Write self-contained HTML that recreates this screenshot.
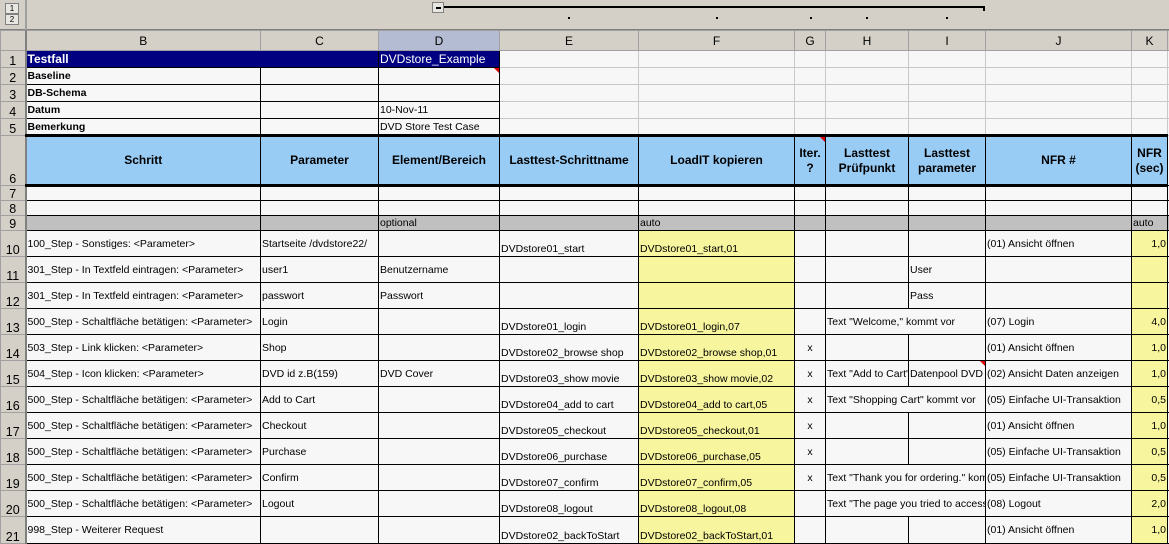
<!DOCTYPE html>
<html><head><meta charset="utf-8"><style>
*{margin:0;padding:0;box-sizing:border-box}
body{width:1169px;height:543px;overflow:hidden;background:#d4d0c8;font-family:"Liberation Sans",Arial,sans-serif;font-size:10.5px;color:#000;position:relative}
.top{position:absolute;left:0;top:0;width:1169px;height:30px;background:#d4d0c8;border-bottom:1px solid #808080}
.vb{position:absolute;left:25px;top:0;width:2px;height:30px;background:#a0a0a0}
.btn{position:absolute;left:5px;width:14px;height:11px;border:1px solid #808080;background:#e8e6e0;font-size:8px;line-height:9px;text-align:center}
.ln{position:absolute;left:444px;top:6px;width:541px;height:2px;background:#000}
.ln2{position:absolute;left:983px;top:6px;width:2px;height:5px;background:#000}
.mb{position:absolute;left:432px;top:2px;width:12px;height:11px;border:1px solid #808080;background:#e8e6e0}
.mb:after{content:"";position:absolute;left:3px;top:4px;width:5px;height:2px;background:#000}
.dot{position:absolute;top:17px;width:2px;height:2px;background:#000}
table{position:absolute;left:0;top:30px;border-collapse:collapse;table-layout:fixed;width:1171px}
td{border:1px solid #000;background:#f7f7f7;white-space:nowrap;overflow:hidden;padding:0 1px;vertical-align:middle;line-height:12px}
tr.ch td{background:#d4d0c8;border:1px solid #a0a0a0;text-align:center;font-size:12px;height:20px}
td.rh{background:#d4d0c8;border:1px solid #a0a0a0;border-right:2px solid #808080;text-align:center;font-size:12.5px;vertical-align:bottom;padding:0}
tr.m td:not(.rh){border-color:#c8c8c8}
tr.m td.k{border-color:#000}
.nv{background:#000080 !important;color:#fff;font-weight:bold;font-size:12px}
.nvd{background:#000080 !important;color:#fff;font-size:12px}
.b{font-weight:bold}
tr.h td:not(.rh){background:#99ccf5;font-weight:bold;font-size:12px;text-align:center;border-top:3px solid #000;border-bottom:3px solid #000;white-space:normal;line-height:15px}
tr.g td:not(.rh){background:#c0c0c0}
.y{background:#f8f59f !important}
.bt{vertical-align:bottom;padding-bottom:1px}
.r{text-align:right}
.c{text-align:center}
</style></head><body>
<div class="top">
<div class="vb"></div>
<div class="btn" style="top:3px">1</div><div class="btn" style="top:14px">2</div>
<div class="mb"></div><div class="ln"></div><div class="ln2"></div>
<div class="dot" style="left:568px"></div><div class="dot" style="left:716px"></div><div class="dot" style="left:810px"></div><div class="dot" style="left:866px"></div><div class="dot" style="left:946px"></div>
</div>
<table>
<colgroup><col style="width:25px"><col style="width:235px"><col style="width:118px"><col style="width:121px"><col style="width:139px"><col style="width:156px"><col style="width:31px"><col style="width:83px"><col style="width:77px"><col style="width:146px"><col style="width:36px"><col style="width:4px"></colgroup>
<tr class="ch"><td style="border-right:2px solid #808080"></td><td>B</td><td>C</td><td style="background:#b4bcd4">D</td><td>E</td><td>F</td><td>G</td><td>H</td><td>I</td><td>J</td><td>K</td><td></td></tr>
<tr class="m" style="height:17px"><td class="rh">1</td><td class="nv k" colspan="2">Testfall</td><td class="nvd k">DVDstore_Example</td><td></td><td></td><td></td><td></td><td></td><td></td><td></td><td></td></tr>
<tr class="m" style="height:17px"><td class="rh">2</td><td class="b k">Baseline</td><td class="k"></td><td class="k" style="position:relative"><span style="position:absolute;right:0;top:0;width:0;height:0;border-top:5px solid #d00;border-left:5px solid transparent"></span></td><td></td><td></td><td></td><td></td><td></td><td></td><td></td><td></td></tr>
<tr class="m" style="height:17px"><td class="rh">3</td><td class="b k">DB-Schema</td><td class="k"></td><td class="k"></td><td></td><td></td><td></td><td></td><td></td><td></td><td></td><td></td></tr>
<tr class="m" style="height:17px"><td class="rh">4</td><td class="b k">Datum</td><td class="k"></td><td class="k">10-Nov-11</td><td></td><td></td><td></td><td></td><td></td><td></td><td></td><td></td></tr>
<tr class="m" style="height:17px"><td class="rh">5</td><td class="b k">Bemerkung</td><td class="k"></td><td class="k">DVD Store Test Case</td><td></td><td></td><td></td><td></td><td></td><td></td><td></td><td></td></tr>
<tr class="h" style="height:50px"><td class="rh">6</td><td>Schritt</td><td>Parameter</td><td>Element/Bereich</td><td>Lasttest-Schrittname</td><td>LoadIT kopieren</td><td style="position:relative">Iter. ?<span style="position:absolute;right:0;top:0;border-top:5px solid #d00;border-left:5px solid transparent"></span></td><td>Lasttest Prüfpunkt</td><td>Lasttest parameter</td><td>NFR #</td><td>NFR (sec)</td><td style="background:#f7f7f7;border:none"></td></tr>
<tr style="height:15px"><td class="rh">7</td><td></td><td></td><td></td><td></td><td></td><td></td><td></td><td></td><td></td><td></td><td></td></tr>
<tr style="height:15px"><td class="rh">8</td><td></td><td></td><td></td><td></td><td></td><td></td><td></td><td></td><td></td><td></td><td></td></tr>
<tr class="g" style="height:15px"><td class="rh">9</td><td></td><td></td><td class="bt">optional</td><td></td><td class="bt">auto</td><td></td><td></td><td></td><td></td><td class="bt">auto</td><td></td></tr>
<tr style="height:26px"><td class="rh">10</td><td>100_Step - Sonstiges: &lt;Parameter&gt;</td><td>Startseite /dvdstore22/</td><td></td><td class="bt">DVDstore01_start</td><td class="y bt">DVDstore01_start,01</td><td></td><td></td><td></td><td>(01) Ansicht öffnen</td><td class="y r">1,0</td><td></td></tr>
<tr style="height:26px"><td class="rh">11</td><td>301_Step - In Textfeld eintragen: &lt;Parameter&gt;</td><td>user1</td><td>Benutzername</td><td></td><td class="y"></td><td></td><td></td><td>User</td><td></td><td class="y"></td><td></td></tr>
<tr style="height:26px"><td class="rh">12</td><td>301_Step - In Textfeld eintragen: &lt;Parameter&gt;</td><td>passwort</td><td>Passwort</td><td></td><td class="y"></td><td></td><td></td><td>Pass</td><td></td><td class="y"></td><td></td></tr>
<tr style="height:26px"><td class="rh">13</td><td>500_Step - Schaltfläche betätigen: &lt;Parameter&gt;</td><td>Login</td><td></td><td class="bt">DVDstore01_login</td><td class="y bt">DVDstore01_login,07</td><td></td><td colspan="2">Text "Welcome," kommt vor</td><td>(07) Login</td><td class="y r">4,0</td><td></td></tr>
<tr style="height:26px"><td class="rh">14</td><td>503_Step - Link klicken: &lt;Parameter&gt;</td><td>Shop</td><td></td><td class="bt">DVDstore02_browse shop</td><td class="y bt">DVDstore02_browse shop,01</td><td class="c">x</td><td></td><td></td><td>(01) Ansicht öffnen</td><td class="y r">1,0</td><td></td></tr>
<tr style="height:26px"><td class="rh">15</td><td>504_Step - Icon klicken: &lt;Parameter&gt;</td><td>DVD id z.B(159)</td><td>DVD Cover</td><td class="bt">DVDstore03_show movie</td><td class="y bt">DVDstore03_show movie,02</td><td class="c">x</td><td>Text "Add to Cart"</td><td style="position:relative">Datenpool DVD<span style="position:absolute;right:0;top:0;border-top:5px solid #d00;border-left:5px solid transparent"></span></td><td>(02) Ansicht Daten anzeigen</td><td class="y r">1,0</td><td></td></tr>
<tr style="height:26px"><td class="rh">16</td><td>500_Step - Schaltfläche betätigen: &lt;Parameter&gt;</td><td>Add to Cart</td><td></td><td class="bt">DVDstore04_add to cart</td><td class="y bt">DVDstore04_add to cart,05</td><td class="c">x</td><td colspan="2">Text "Shopping Cart" kommt vor</td><td>(05) Einfache UI-Transaktion</td><td class="y r">0,5</td><td></td></tr>
<tr style="height:26px"><td class="rh">17</td><td>500_Step - Schaltfläche betätigen: &lt;Parameter&gt;</td><td>Checkout</td><td></td><td class="bt">DVDstore05_checkout</td><td class="y bt">DVDstore05_checkout,01</td><td class="c">x</td><td></td><td></td><td>(01) Ansicht öffnen</td><td class="y r">1,0</td><td></td></tr>
<tr style="height:26px"><td class="rh">18</td><td>500_Step - Schaltfläche betätigen: &lt;Parameter&gt;</td><td>Purchase</td><td></td><td class="bt">DVDstore06_purchase</td><td class="y bt">DVDstore06_purchase,05</td><td class="c">x</td><td></td><td></td><td>(05) Einfache UI-Transaktion</td><td class="y r">0,5</td><td></td></tr>
<tr style="height:26px"><td class="rh">19</td><td>500_Step - Schaltfläche betätigen: &lt;Parameter&gt;</td><td>Confirm</td><td></td><td class="bt">DVDstore07_confirm</td><td class="y bt">DVDstore07_confirm,05</td><td class="c">x</td><td colspan="2">Text "Thank you for ordering." kommt vor</td><td>(05) Einfache UI-Transaktion</td><td class="y r">0,5</td><td></td></tr>
<tr style="height:26px"><td class="rh">20</td><td>500_Step - Schaltfläche betätigen: &lt;Parameter&gt;</td><td>Logout</td><td></td><td class="bt">DVDstore08_logout</td><td class="y bt">DVDstore08_logout,08</td><td></td><td colspan="2">Text "The page you tried to access"</td><td>(08) Logout</td><td class="y r">2,0</td><td></td></tr>
<tr style="height:27px"><td class="rh">21</td><td>998_Step - Weiterer Request</td><td></td><td></td><td class="bt">DVDstore02_backToStart</td><td class="y bt">DVDstore02_backToStart,01</td><td></td><td></td><td></td><td>(01) Ansicht öffnen</td><td class="y r">1,0</td><td></td></tr>
</table>
</body></html>
